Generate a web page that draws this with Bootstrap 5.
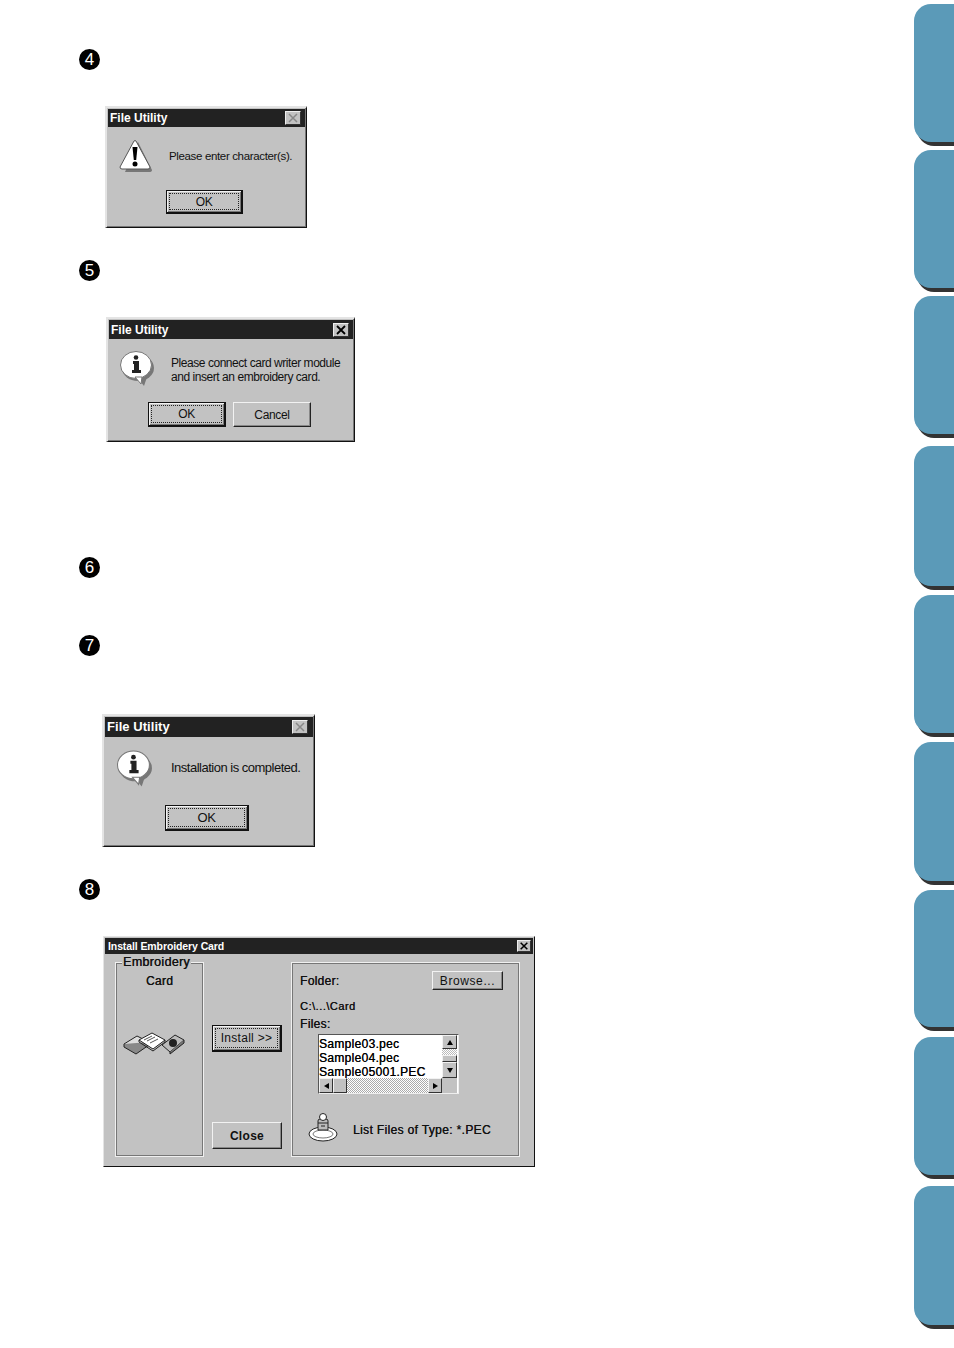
<!DOCTYPE html>
<html lang="en"><head><meta charset="utf-8"><title>File Utility</title>
<link href="https://cdn.jsdelivr.net/npm/bootstrap@5.3.0/dist/css/bootstrap.min.css" rel="stylesheet">
<style>
html,body{margin:0;background:#fff;overflow:hidden}
.sheet{width:954px;height:1348px;font-family:"Liberation Sans",Arial,sans-serif;color:#111}
.main-col{padding-left:79px;width:600px}
.mk{width:21px;height:21px;border-radius:50%;background:#000;color:#fff;font-size:17px;line-height:21px;text-align:center}
.m4{margin-top:49px}.m5{margin-top:32px}.m6{margin-top:115px}.m7{margin-top:57px}.m8{margin-top:32px}
.dlg{background:#c2c2c2;border:2px solid;border-color:#e4e4e4 #111 #111 #e4e4e4;border-right-width:1px;border-bottom-width:1px;box-shadow:inset -1px -1px 0 #777;padding:1px;font-size:12px;letter-spacing:-.35px;line-height:14px}
.d1{width:202px;height:122px;margin:36px 0 0 26px}
.d2{width:249px;height:125px;margin:36px 0 0 27px}
.d3{width:213px;height:133px;margin:58px 0 0 23px}
.d4{width:432px;height:231px;margin:36px 0 0 24px;border-width:1px;box-shadow:none}
.tbar{height:18px;background:#222;color:#fff;font-weight:700;font-size:12px;letter-spacing:0;padding:0 4px 0 2px}
.d2 .tbar{height:19px}.d3 .tbar{height:20px;font-size:13px;letter-spacing:.05px;padding-right:5px}.d4 .tbar{height:16px;font-size:10.5px;letter-spacing:-.1px;padding:0 3px}
.xbtn{width:16px;height:14px;background:#c2c2c2;border:1px solid;border-color:#eee #333 #333 #eee}
.d4 .xbtn{width:14px;height:12px;margin-right:-1px}
.xbtn svg{display:block;width:100%;height:100%}
.d1 .body1{padding:12px 0 0 11px;gap:16px}
.d2 .body1{padding:12px 0 0 11px;gap:16px}
.d3 .body1{padding:13px 0 0 12px;gap:18px}
.msg{white-space:nowrap}
.d1 .msg{font-size:11.5px}
.d2 .msg{font-size:12px;letter-spacing:-.45px;margin-bottom:-2px}
.d3 .msg{font-size:13px;letter-spacing:-.5px;margin-bottom:2px}
.wbtn{background:#c2c2c2;color:#111;border:1px solid;border-color:#f2f2f2 #222 #222 #f2f2f2;box-shadow:inset -1px -1px 0 #888;display:flex;align-items:center;justify-content:center;padding:0;font:inherit;letter-spacing:inherit;border-radius:0}
.wbtn.dflt{border:2px solid #111;border-top-width:1px;border-left-width:1px;box-shadow:inset 1px 1px 0 #f2f2f2,inset -1px -1px 0 #777;position:relative}
.wbtn.dflt::after{content:"";position:absolute;inset:2px;border:1px dotted #222}
.d1 .wrow{padding:17px 0 0 58px}.d1 .wbtn{width:77px;height:24px}
.d2 .wrow{padding:16px 0 0 39px;gap:7px}.d2 .wbtn{width:78px;height:25px}
.d3 .wrow{padding:18px 0 0 60px}.d3 .wbtn{width:84px;height:26px;font-size:13px}
.d4 .wmain{height:211px;padding:8px 12px 0 10px;font-size:12px;letter-spacing:.3px;font-weight:400;text-shadow:.3px 0 0 #222}
.gbox{border:1px solid #f0f0f0;outline:1px solid #777;outline-offset:-2px;height:195px}
.g-left{width:89px;text-align:center;position:relative;padding-top:11px}
.g-legend{position:absolute;top:-8px;left:6px;background:#c2c2c2;padding:0 1px;font-size:12.5px;line-height:15px;white-space:nowrap}
.cards{display:block;margin:43px 0 0 7px}
.g-mid{width:70px;margin:0 9px 0 8px;padding-top:63px}
.g-mid .wbtn{width:70px;height:27px}
.g-mid .wbtn+.wbtn{margin-top:70px}
.g-right{width:229px;padding:8px 0 0 8px;position:relative}
.browse{width:71px;height:19px;margin-left:auto;margin-right:16px;margin-top:0;letter-spacing:.6px}
.ln1{margin-top:9px;font-size:11px;letter-spacing:.5px}.ln2{margin-top:4px}
.listb{width:141px;height:60px;margin:3px 0 0 18px;background:#fff;border:1px solid;border-color:#555 #eee #eee #555;display:grid;grid-template-columns:123px 15px;grid-template-rows:43px 15px;color:#000}
.listi{padding-top:2px;line-height:14px;font-size:12px;letter-spacing:.3px;overflow:hidden;white-space:nowrap}
.sb-v{display:flex;flex-direction:column;background-image:repeating-conic-gradient(#bbb 0 25%,#fff 0 50%);background-size:2px 2px}
.sb-h{display:flex;background-image:repeating-conic-gradient(#aaa 0 25%,#fff 0 50%);background-size:2px 2px}
.sbb{background:#c2c2c2;border:1px solid;border-color:#f2f2f2 #333 #333 #f2f2f2;display:flex;align-items:center;justify-content:center;flex:none}
.sb-v .sbb{width:15px;height:14px}.sb-v .thumb{height:7px;margin-top:6px}.sb-v .dn{height:16px;margin-top:0}
.sb-h .sbb{width:14px;height:15px}.sb-h .rt{margin-left:auto}
.corner{background:#c2c2c2}
.tri{width:0;height:0;border:3px solid transparent}
.up{border-bottom:5px solid #000;border-top:0}.down{border-top:5px solid #000;border-bottom:0}
.lf{border-right:5px solid #000;border-left:0}.ri{border-left:5px solid #000;border-right:0}
.ftype{margin:18px 0 0 8px;gap:15px;white-space:nowrap}
.ftype svg{display:block}
.ftype span{margin-top:6px;letter-spacing:.35px}
.tabs{display:grid;grid-template-rows:146px 146px 150px 149px 147px 148px 147px 149px 143px;padding-top:4px;width:40px;justify-items:end}
.tabx{width:40px;height:138px;background:#5b9ab8;border-radius:17px 0 0 17px;box-shadow:3px 4px 0 #333}
.tabx:nth-child(4){height:140px}.tabx:nth-child(6){height:139px}.tabx:nth-child(7){height:137px}.tabx:nth-child(9){height:139px}
</style></head>
<body>
<div class="sheet d-flex justify-content-between">
<div class="main-col">

<div class="mk m4">4</div>
<div class="dlg d1">
  <div class="tbar d-flex justify-content-between align-items-center"><span>File Utility</span><span class="xbtn"><svg viewBox="0 0 14 12"><path d="M3 2l8 8M11 2l-8 8" stroke="#888" stroke-width="1.5"/></svg></span></div>
  <div class="body1 d-flex align-items-center">
    <svg width="34" height="34" viewBox="0 0 34 34"><path d="M19 3L33 31Q33 33 30 33H6Z" fill="#777"/><path d="M15 2Q16 1 17 2L31 28Q31 30 29 30H3Q1 30 1 28Z" fill="#fff" stroke="#555"/><path d="M13.5 8h5l-1.3 13h-2.4z" fill="#000"/><circle cx="16" cy="25" r="2.5" fill="#000"/></svg>
    <span class="msg">Please enter character(s).</span>
  </div>
  <div class="wrow d-flex"><button class="wbtn dflt" type="button">OK</button></div>
</div>

<div class="mk m5">5</div>
<div class="dlg d2">
  <div class="tbar d-flex justify-content-between align-items-center"><span>File Utility</span><span class="xbtn"><svg viewBox="0 0 14 12"><path d="M3 2l8 8M11 2l-8 8" stroke="#000" stroke-width="1.8"/></svg></span></div>
  <div class="body1 d-flex align-items-center">
    <svg width="35" height="35" viewBox="0 0 35 35"><ellipse cx="18" cy="17" rx="16" ry="13" fill="#777"/><path d="M17 26L24 35L27 26Z" fill="#777"/><ellipse cx="16" cy="14" rx="15.5" ry="13.5" fill="#fff" stroke="#777"/><path d="M15 26L21 33L22 26Z" fill="#fff" stroke="#777"/><path d="M13 10h6v9h2v3h-9v-3h2v-6h-1z" fill="#222"/><circle cx="16" cy="6.5" r="2.3" fill="#222"/></svg>
    <span class="msg">Please connect card writer module<br>and insert an embroidery card.</span>
  </div>
  <div class="wrow d-flex"><button class="wbtn dflt" type="button">OK</button><button class="wbtn" type="button">Cancel</button></div>
</div>

<div class="mk m6">6</div>
<div class="mk m7">7</div>
<div class="dlg d3">
  <div class="tbar d-flex justify-content-between align-items-center"><span>File Utility</span><span class="xbtn"><svg viewBox="0 0 14 12"><path d="M3 2l8 8M11 2l-8 8" stroke="#888" stroke-width="1.5"/></svg></span></div>
  <div class="body1 d-flex align-items-center">
    <svg width="36" height="37" viewBox="0 0 35 35"><ellipse cx="18" cy="17" rx="16" ry="13" fill="#777"/><path d="M17 26L24 35L27 26Z" fill="#777"/><ellipse cx="16" cy="14" rx="15.5" ry="13.5" fill="#fff" stroke="#777"/><path d="M15 26L21 33L22 26Z" fill="#fff" stroke="#777"/><path d="M13 10h6v9h2v3h-9v-3h2v-6h-1z" fill="#222"/><circle cx="16" cy="6.5" r="2.3" fill="#222"/></svg>
    <span class="msg">Installation is completed.</span>
  </div>
  <div class="wrow d-flex"><button class="wbtn dflt" type="button">OK</button></div>
</div>

<div class="mk m8">8</div>
<div class="dlg d4">
  <div class="tbar d-flex justify-content-between align-items-center"><span>Install Embroidery Card</span><span class="xbtn"><svg viewBox="0 0 14 12"><path d="M3 2l8 8M11 2l-8 8" stroke="#000" stroke-width="1.8"/></svg></span></div>
  <div class="wmain d-flex">
    <div class="gbox g-left flex-none">
      <span class="g-legend">Embroidery</span>
      <span>Card</span>
      <svg class="cards" width="62" height="24" viewBox="0 0 62 24">
        <path d="M1 13L14 5L26 11L13 20Z" fill="#ddd" stroke="#222"/><path d="M1 13V16L13 23L26 14V11" fill="#888" stroke="#222"/>
        <path d="M16 9L29 2L42 9L30 18Z" fill="#fff" stroke="#222"/><path d="M21 9l8-4M24 10l8-4M27 12l8-4" stroke="#555"/>
        <path d="M16 9V11L30 20L42 11V9" fill="none" stroke="#222"/>
        <path d="M39 14L52 4L61 9L47 21Z" fill="#bbb" stroke="#222"/><path d="M47 21V23L61 12V9" fill="#777" stroke="#222"/><circle cx="50" cy="12" r="4" fill="#222"/>
      </svg>
    </div>
    <div class="g-mid flex-none">
      <button class="wbtn dflt" type="button">Install &gt;&gt;</button>
      <button class="wbtn" type="button"><b>Close</b></button>
    </div>
    <div class="gbox g-right flex-none">
      <div class="d-flex align-items-center"><span>Folder:</span><button class="wbtn browse" type="button">Browse...</button></div>
      <div class="ln1">C:\...\Card</div>
      <div class="ln2">Files:</div>
      <div class="listb">
        <div class="listi">Sample03.pec<br>Sample04.pec<br>Sample05001.PEC</div>
        <div class="sb-v"><span class="sbb"><i class="tri up"></i></span><span class="sbb thumb"></span><span class="sbb dn"><i class="tri down"></i></span></div>
        <div class="sb-h"><span class="sbb"><i class="tri lf"></i></span><span class="sbb"></span><span class="sbb rt"><i class="tri ri"></i></span></div>
        <div class="corner"></div>
      </div>
      <div class="ftype d-flex align-items-center">
        <svg width="30" height="30" viewBox="0 0 30 30"><ellipse cx="15" cy="22" rx="14" ry="7" fill="#fff" stroke="#222"/><ellipse cx="15" cy="22" rx="10" ry="4" fill="none" stroke="#777"/><path d="M10 18V9Q10 7 12 7H18Q20 7 20 9V18Z" fill="#bbb" stroke="#222"/><circle cx="15" cy="5" r="3.5" fill="#fff" stroke="#222"/><path d="M10 11h10M13 14h4" stroke="#222"/></svg>
        <span>List Files of Type: *.PEC</span>
      </div>
    </div>
  </div>
</div>

</div>
<div class="tabs">
<div class="tabx"></div><div class="tabx"></div><div class="tabx"></div><div class="tabx"></div><div class="tabx"></div><div class="tabx"></div><div class="tabx"></div><div class="tabx"></div><div class="tabx"></div>
</div>
</div>
<script src="https://cdn.jsdelivr.net/npm/bootstrap@5.3.0/dist/js/bootstrap.bundle.min.js"></script>
</body></html>
